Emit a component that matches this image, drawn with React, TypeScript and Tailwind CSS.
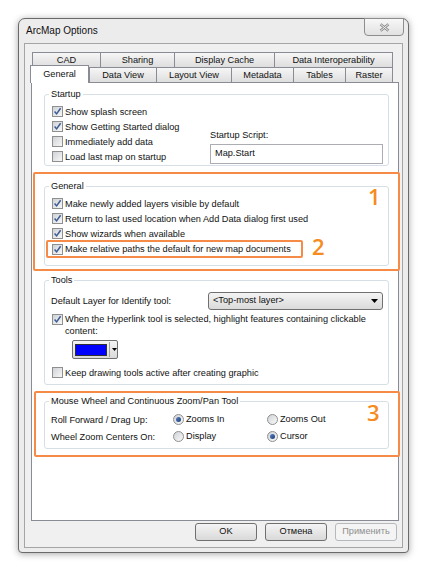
import React from "react";

function Check({ checked }: { checked: boolean }) {
  return (
    <span className="inline-flex w-[11px] h-[11px] shrink-0 items-center justify-center border border-[#8e8f8f] bg-linear-to-br from-[#cfd2d6] to-[#f8f8f8]">
      {checked && (
        <svg width="9" height="9" viewBox="0 0 9 9">
          <path d="M1.6 4.6 L3.6 6.9 L7.6 1.3" fill="none" stroke="#3b5b94" strokeWidth="1.5" />
        </svg>
      )}
    </span>
  );
}

function Radio({ checked }: { checked: boolean }) {
  return (
    <span className="inline-flex w-[11px] h-[11px] shrink-0 items-center justify-center rounded-full border border-[#8e8f8f] bg-linear-to-br from-[#cfd2d6] to-[#fafafa]">
      {checked && <span className="w-[5px] h-[5px] rounded-full bg-linear-to-br from-[#5a7fc0] to-[#1f3f7a]" />}
    </span>
  );
}

function CheckRow({ checked, label }: { checked: boolean; label: string }) {
  return (
    <div className="flex items-center gap-[2px] h-[15px] whitespace-nowrap">
      <Check checked={checked} />
      <span className="leading-[12px]">{label}</span>
    </div>
  );
}

function Tab({ label, w, last }: { label: string; w: number; last?: boolean }) {
  return (
    <div
      style={{ width: w }}
      className={`h-[15px] flex items-center justify-center border-t border-l border-[#898c95] bg-linear-to-b from-[#f6f6f6] to-[#dedede] leading-[12px] whitespace-nowrap ${last ? "border-r" : ""}`}
    >
      {label}
    </div>
  );
}

function Btn({ label, disabled }: { label: string; disabled?: boolean }) {
  return disabled ? (
    <div className="w-[62px] h-[18px] rounded-[3px] border border-[#b5b9bc] bg-[#f4f4f4] text-[#8f8f8f] flex items-center justify-center">
      {label}
    </div>
  ) : (
    <div className="w-[62px] h-[18px] rounded-[3px] border border-[#707070] bg-linear-to-b from-[#f4f4f4] to-[#d9d9d9] flex items-center justify-center">
      {label}
    </div>
  );
}

export default function App() {
  return (
    <div className="w-[434px] h-[570px] bg-white pt-[18px] pl-[18px] font-['Liberation_Sans',Arial,sans-serif] text-[9.2px] text-[#111]">
      <div className="w-[391px] h-[535px] rounded-t-[7px] rounded-b-[4px] border border-[#6a6a6a] bg-[#ececec] shadow-[0_1px_7px_rgba(0,0,0,0.35)] flex flex-col">
        {/* Title bar */}
        <div className="h-[24px] flex items-center justify-between pl-[7px] pr-[4px]">
          <span className="text-[10px] leading-[12px]">ArcMap Options</span>
          <div className="self-start -mt-[1px] w-[40px] h-[18px] rounded-b-[4px] border border-[#8d8d8d] bg-linear-to-b from-[#f7f7f7] to-[#e2e2e2] flex items-center justify-center">
            <svg width="11" height="9" viewBox="0 0 11 9">
              <path d="M1.5 1.2 L9.5 7.8 M9.5 1.2 L1.5 7.8" stroke="#8a8a8a" strokeWidth="2.6" />
              <path d="M1.5 1.2 L9.5 7.8 M9.5 1.2 L1.5 7.8" stroke="#f3f3f3" strokeWidth="1" />
            </svg>
          </div>
        </div>

        {/* Client area */}
        <div className="mx-[5px] h-[505px] border border-[#a5a5a5] bg-[#f0f0f0] pl-[6px] pt-[8px] flex flex-col">
          {/* Tabs */}
          <div className="w-[368px]">
            <div className="flex ml-[1px]">
              <Tab label="CAD" w={68} />
              <Tab label="Sharing" w={74} />
              <Tab label="Display Cache" w={100} />
              <Tab label="Data Interoperability" w={119} last />
            </div>
            <div className="flex items-end h-[15px] -ml-[1px]">
              <div className="relative z-10 w-[59px] h-[18px] -mb-[1px] border-t border-l border-r border-[#898c95] bg-white flex items-start justify-center pt-[2px] leading-[12px]">
                General
              </div>
              <Tab label="Data View" w={67} />
              <Tab label="Layout View" w={75} />
              <Tab label="Metadata" w={62} />
              <Tab label="Tables" w={52} />
              <Tab label="Raster" w={48} last />
            </div>
          </div>

          {/* Panel */}
          <div className="w-[368px] h-[439px] border border-[#898c95] bg-white flex flex-col">
            {/* Startup */}
            <fieldset className="ml-[12px] mt-[5px] w-[345px] border border-[#d5dfe5] rounded-[3px]">
              <legend className="ml-[4px] px-[2px] leading-[12px]">Startup</legend>
              <div className="flex justify-between items-end pl-[7px] pr-[5px] pt-[4px] pb-[1px]">
                <div className="flex flex-col">
                  <CheckRow checked label="Show splash screen" />
                  <CheckRow checked label="Show Getting Started dialog" />
                  <CheckRow checked={false} label="Immediately add data" />
                  <CheckRow checked={false} label="Load last map on startup" />
                </div>
                <div className="flex flex-col w-[173px]">
                  <span className="leading-[12px] mb-[3px]">Startup Script:</span>
                  <div className="h-[20px] border border-[#abadb3] bg-white flex items-center pl-[4px]">Map.Start</div>
                </div>
              </div>
            </fieldset>

            {/* General (orange 1) */}
            <div className="relative ml-[1px] mt-[6px] w-[367px] border-2 border-[#f68b47] rounded-[2px] pl-[9px] pt-[6px] pb-[3px]">
              <fieldset className="w-[345px] border border-[#d5dfe5] rounded-[3px]">
                <legend className="ml-[4px] px-[2px] leading-[12px]">General</legend>
                <div className="flex flex-col pl-[1px] pt-[4px] pb-[7px]">
                  <div className="pl-[6px]">
                    <CheckRow checked label="Make newly added layers visible by default" />
                    <CheckRow checked label="Return to last used location when Add Data dialog first used" />
                    <CheckRow checked label="Show wizards when available" />
                  </div>
                  <div className="flex items-center -mt-[1px]">
                    <div className="w-[257px] h-[18px] border-2 border-[#f68b47] rounded-[2px] pl-[4px] flex items-center">
                      <CheckRow checked label="Make relative paths the default for new map documents" />
                    </div>
                    <span className="ml-[9px] -mt-[6px] text-[22px] leading-none font-semibold text-[#f68b20] font-['Open_Sans',sans-serif]">2</span>
                  </div>
                </div>
              </fieldset>
              <span className="absolute left-[333px] top-[11px] text-[22px] leading-none font-semibold text-[#f68b20] font-['Open_Sans',sans-serif]">1</span>
            </div>

            {/* Tools */}
            <fieldset className="ml-[12px] mt-[3px] w-[345px] border border-[#d5dfe5] rounded-[3px]">
              <legend className="ml-[4px] px-[2px] leading-[12px]">Tools</legend>
              <div className="flex flex-col pt-[6px] pb-[4px]">
                <div className="flex items-center justify-between h-[18px] pl-[6px] pr-[5px]">
                  <span className="leading-[12px]">Default Layer for Identify tool:</span>
                  <div className="w-[175px] h-[18px] rounded-[3px] border border-[#707070] bg-linear-to-b from-[#f4f4f4] to-[#dadada] flex items-center justify-between pl-[4px] pr-[4px]">
                    <span>&lt;Top-most layer&gt;</span>
                    <svg width="7" height="4" viewBox="0 0 7 4">
                      <path d="M0 0 H7 L3.5 4 Z" fill="#000" />
                    </svg>
                  </div>
                </div>
                <div className="flex items-start gap-[2px] mt-[3px] pl-[7px]">
                  <div className="mt-[1px]">
                    <Check checked />
                  </div>
                  <span className="leading-[12px] whitespace-nowrap">
                    When the Hyperlink tool is selected, highlight features containing clickable
                    <br />
                    content:
                  </span>
                </div>
                <div className="ml-[27px] mt-[3px] w-[46px] h-[19px] rounded-[2px] border border-[#707070] bg-linear-to-b from-[#f4f4f4] to-[#dadada] flex items-center pl-[2px]">
                  <div className="w-[32px] h-[12px] border border-[#303030] bg-[#0000ff]" />
                  <div className="ml-[2px] h-[15px] border-l border-[#a0a0a0]" />
                  <svg className="ml-[2px]" width="5" height="3" viewBox="0 0 5 3">
                    <path d="M0 0 H5 L2.5 3 Z" fill="#000" />
                  </svg>
                </div>
                <div className="mt-[6px] pl-[7px]">
                  <CheckRow checked={false} label="Keep drawing tools active after creating graphic" />
                </div>
              </div>
            </fieldset>

            {/* Mouse wheel (orange 3) */}
            <div className="relative ml-[2px] mt-[6px] w-[366px] border-2 border-[#f68b47] rounded-[2px] pl-[8px] pt-[2px] pb-[6px]">
              <fieldset className="w-[345px] border border-[#d5dfe5] rounded-[3px]">
                <legend className="ml-[4px] px-[2px] leading-[12px]">Mouse Wheel and Continuous Zoom/Pan Tool</legend>
                <div className="flex flex-col pl-[6px] pt-[5px] pb-[4px]">
                  <div className="flex items-center h-[15px]">
                    <span className="w-[122px] leading-[12px]">Roll Forward / Drag Up:</span>
                    <div className="w-[94px] flex items-center gap-[2px]">
                      <Radio checked />
                      <span>Zooms In</span>
                    </div>
                    <div className="flex items-center gap-[2px]">
                      <Radio checked={false} />
                      <span>Zooms Out</span>
                    </div>
                  </div>
                  <div className="flex items-center h-[15px] mt-[2px]">
                    <span className="w-[122px] leading-[12px]">Wheel Zoom Centers On:</span>
                    <div className="w-[94px] flex items-center gap-[2px]">
                      <Radio checked={false} />
                      <span>Display</span>
                    </div>
                    <div className="flex items-center gap-[2px]">
                      <Radio checked />
                      <span>Cursor</span>
                    </div>
                  </div>
                </div>
              </fieldset>
              <span className="absolute left-[331px] top-[8px] text-[22px] leading-none font-semibold text-[#f68b20] font-['Open_Sans',sans-serif]">3</span>
            </div>
          </div>

          {/* Buttons */}
          <div className="w-[368px] mt-[2px] pr-[2px] flex justify-end gap-[8px]">
            <Btn label="OK" />
            <Btn label="Отмена" />
            <Btn label="Применить" disabled />
          </div>
        </div>
      </div>
    </div>
  );
}
